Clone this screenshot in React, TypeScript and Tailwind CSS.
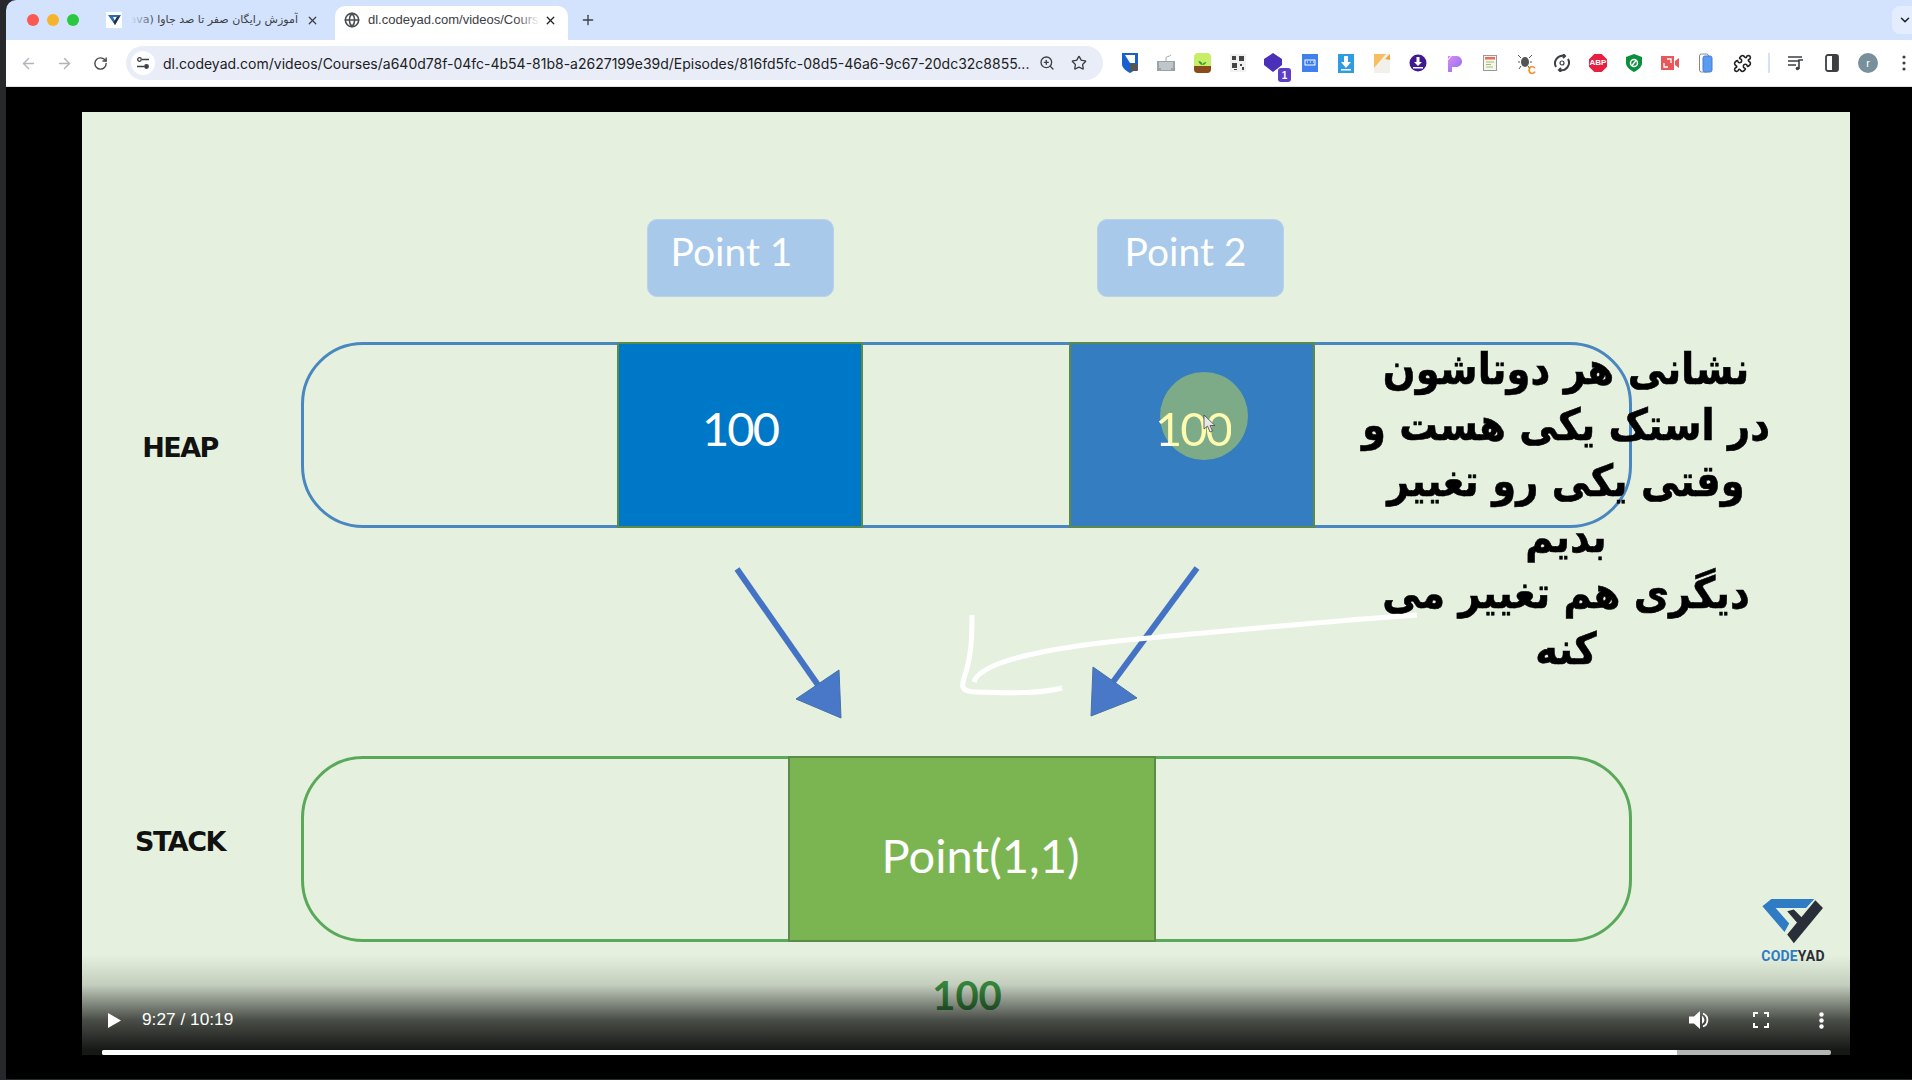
import { ArrowLeft, ArrowRight, RotateCw, ZoomIn, Star, X, Plus, ChevronDown, Globe, Puzzle } from "lucide-react";

const I = ({ children }: { children: React.ReactNode }) => (
  <div className="relative flex h-[36px] w-[36px] shrink-0 items-center justify-center">{children}</div>
);

const Extensions = () => (
  <div className="ml-[9px] flex items-center">
    <I>
      <svg width="17" height="20" viewBox="0 0 17 20"><path d="M0 0h16v11c0 4-4 7-8 9-4-2-8-5-8-9z" fill="#1a5fd0" /><path d="M3 2h10v8H8z" fill="#fff" /><rect x="8" y="11" width="8" height="7" rx="1" fill="#555" /></svg>
    </I>
    <I>
      <svg width="18" height="18" viewBox="0 0 18 18"><rect x="0" y="7" width="18" height="10" fill="#9aa3a8" /><path d="M9 7V4c0-2 3-1 5-3" stroke="#aaa" fill="none" /><path d="M2 9h14M2 11h14M2 13h14M4 15h10" stroke="#e6e8ea" /></svg>
    </I>
    <I>
      <svg width="17" height="20" viewBox="0 0 17 20"><rect width="17" height="20" rx="4" fill="#c8ee68" /><path d="M0 13h17v3a4 4 0 0 1-4 4H4a4 4 0 0 1-4-4z" fill="#8a4a1c" /><path d="M8.500 12c0-3-2-4-4-4 0 2 2 4 4 4 0-2 2-3 4-3-1 2-2 3-4 3" fill="#3a9a3a" /></svg>
    </I>
    <I>
      <svg width="16" height="18" viewBox="0 0 16 18"><rect width="16" height="18" fill="#f1f1f1" /><path d="M2 2h4v4H2zM9 2h5v5H9zM2 9h5v5H2zM10 10h2v2h-2zM12 13h2v3h-2zM4 15h3v1H4z" fill="#444" /></svg>
    </I>
    <I>
      <svg width="20" height="20" viewBox="0 0 20 20"><path d="M9 0l9 6v6l-9 7-9-7V6z" fill="#4a2fb8" /></svg>
      <div className="absolute bottom-[-1px] right-[1px] flex h-[14px] w-[13px] items-center justify-center rounded-[3px] bg-[#5d3ec7] font-['Liberation_Sans'] text-[10px] font-bold text-white">1</div>
    </I>
    <I>
      <svg width="16" height="18" viewBox="0 0 16 18"><rect width="16" height="18" fill="#3f7fee" /><rect x="3" y="6" width="10" height="5" fill="none" stroke="#fff" /><path d="M5 8h1M8 8h1M11 8h1" stroke="#fff" /></svg>
    </I>
    <I>
      <svg width="16" height="19" viewBox="0 0 16 19"><rect width="16" height="19" fill="#2f9be0" /><path d="M6 2h4v6h3l-5 6-5-6h3z" fill="#fff" /><rect x="3" y="15" width="10" height="1.500" fill="#fff" /></svg>
    </I>
    <I>
      <svg width="16" height="19" viewBox="0 0 16 19"><rect width="16" height="19" fill="#f2f0ea" /><path d="M0 0h12L0 14z" fill="#f8bd5c" /><path d="M16 0v6l-5-1z" fill="#f5a33a" /></svg>
    </I>
    <I>
      <svg width="18" height="18" viewBox="0 0 18 18"><circle cx="9" cy="9" r="8.500" fill="#3f1a8f" /><path d="M7.500 3h3v5h2.500L9 12 5 8h2.500z" fill="#fff" /><rect x="4" y="13" width="10" height="1.500" fill="#fff" /></svg>
    </I>
    <I>
      <svg width="16" height="18" viewBox="0 0 16 18">
        <defs><linearGradient id="pg" x1="0" y1="0" x2="1" y2="1"><stop offset="0" stopColor="#d98cf0" /><stop offset="1" stopColor="#8a6cf5" /></linearGradient></defs>
        <path d="M2 2h8a5.500 5.500 0 0 1 1 11H6v5H2z" fill="url(#pg)" /><path d="M1 7l6-7M1 3l3-3" stroke="#fff" />
      </svg>
    </I>
    <I>
      <svg width="14" height="16" viewBox="0 0 14 16"><rect x=".5" y=".5" width="13" height="15" fill="#f7f5f0" stroke="#999" /><rect x="2" y="2" width="10" height="2.500" fill="#ee6a5a" /><path d="M3 7h8M3 9.500h5M3 12h7" stroke="#9bc46a" /></svg>
    </I>
    <I>
      <svg width="17" height="20" viewBox="0 0 17 20"><ellipse cx="7" cy="9" rx="4" ry="5" fill="#555" /><path d="M3 5L0 2M11 5l3-3M2 9H0M12 9h2M3 13l-2 3M10 13l2 3" stroke="#555" fill="none" /></svg>
      <span className="absolute bottom-[5px] right-[8px] font-['Liberation_Sans'] text-[11px] font-bold leading-none text-[#f08c1a]">C</span>
    </I>
    <I>
      <svg width="18" height="18" viewBox="0 0 18 18" fill="none" stroke="#3d4043" strokeWidth="2"><path d="M3 13A7.500 7.500 0 0 1 11 2" /><path d="M15 5a7.500 7.500 0 0 1-8 11" /><path d="M10 0l2 2-2 2M8 14l-2 2 2 2" /><circle cx="9" cy="9" r="2" strokeWidth="1.200" /></svg>
    </I>
    <I>
      <svg width="18" height="18" viewBox="0 0 18 18" className="absolute"><path d="M5.300 0h7.400L18 5.300v7.400L12.700 18H5.300L0 12.700V5.300z" fill="#e8203f" /></svg>
      <span className="relative font-['Liberation_Sans'] text-[8px] font-bold leading-none text-white">ABP</span>
    </I>
    <I>
      <svg width="16" height="18" viewBox="0 0 16 18"><path d="M8 0l8 3v6c0 4-4 7-8 9-4-2-8-5-8-9V3z" fill="#0a8f3c" /><circle cx="8" cy="9" r="3.500" fill="none" stroke="#fff" strokeWidth="1.500" /><path d="M6 11.500l4-5" stroke="#fff" strokeWidth="1.500" /></svg>
    </I>
    <I>
      <svg width="18" height="14" viewBox="0 0 18 14"><rect width="13" height="14" fill="#e8585a" /><path d="M14 5l4-3v10l-4-3z" fill="#e8585a" /><path d="M3 7v4h4M10 7V3H6" stroke="#fff" strokeWidth="1.300" fill="none" /></svg>
    </I>
    <I>
      <svg width="14" height="20" viewBox="0 0 14 20"><rect x=".5" y="1" width="9" height="18" rx="2" fill="#fff" stroke="#888" /><rect x="4" y="3" width="9" height="16" rx="2" fill="#5b9bf0" stroke="#3f7fd8" /></svg>
    </I>
    <I>
      <Puzzle size={19} color="#202124" strokeWidth={2} />
    </I>
    <div className="mx-[8px] h-[20px] w-[2px] shrink-0 bg-[#d3e3fd]" />
    <I>
      <svg width="16" height="16" viewBox="0 0 16 16" fill="none" stroke="#3c4043" strokeWidth="1.600"><path d="M0 2h14M0 6h11M0 10h8" /><path d="M11 14V5h4" /><circle cx="9.500" cy="13.500" r="1.800" fill="#3c4043" stroke="none" /></svg>
    </I>
    <I>
      <svg width="14" height="18" viewBox="0 0 14 18"><rect x="1" y="1" width="12" height="16" rx="2" fill="#fff" stroke="#3c4043" strokeWidth="1.800" /><rect x="7" y="1" width="6" height="16" fill="#3c4043" /></svg>
    </I>
    <I>
      <div className="flex h-[20px] w-[20px] items-center justify-center rounded-full bg-[#78909c] font-['Liberation_Sans'] text-[11px] text-white">r</div>
    </I>
    <I>
      <svg width="4" height="16" viewBox="0 0 4 16" fill="#3c4043"><circle cx="2" cy="2" r="1.600" /><circle cx="2" cy="8" r="1.600" /><circle cx="2" cy="14" r="1.600" /></svg>
    </I>
  </div>
);

const Browser = () => (
  <>
    <div className="relative flex h-[40px] shrink-0 items-end bg-[#d3e3fd] font-['Liberation_Sans'] text-[12px] text-[#3c4043]">
      <div className="ml-[21px] mb-[14px] flex w-[52px] shrink-0 justify-between">
        <div className="h-[12px] w-[12px] rounded-full bg-[#fa5a52]" />
        <div className="h-[12px] w-[12px] rounded-full bg-[#f5b42c]" />
        <div className="h-[12px] w-[12px] rounded-full bg-[#2ac840]" />
      </div>
      <div className="flex h-[34px] w-[256px] shrink-0 items-center pb-[6px] pl-[27px]">
        <div className="flex h-[16px] w-[16px] shrink-0 items-center justify-center bg-white">
          <svg width="13" height="12" viewBox="0 0 13 12"><path d="M0 1h13L7 11z" fill="#2b6cb8" /><path d="M5 3h4L7 7z" fill="#fff" /><path d="M12 2L7 11 5.500 8 9 3z" fill="#2a2f3a" /></svg>
        </div>
        <div dir="rtl" className="relative ml-[9px] h-[16px] w-[167px] shrink-0 overflow-hidden whitespace-nowrap text-right font-['DejaVu_Sans','Noto_Sans',sans-serif] text-[11px] leading-[16px]">
          آموزش رایگان صفر تا صد جاوا (Java)
          <div className="absolute inset-y-0 left-0 w-[24px] bg-linear-to-r from-[#d3e3fd] to-transparent" />
        </div>
        <X size={13} strokeWidth={2.200} className="ml-[8px] shrink-0 text-[#3c4043]" />
      </div>
      <div className="flex h-[34px] w-[233px] shrink-0 items-center rounded-t-[10px] bg-white pb-[6px] pl-[9px]">
        <Globe size={16} strokeWidth={2.400} className="shrink-0 text-[#4a4d52]" />
        <div className="relative ml-[8px] w-[172px] shrink-0 overflow-hidden whitespace-nowrap text-[13px] leading-[16px]">
          dl.codeyad.com/videos/Courses/a640d78f
          <div className="absolute inset-y-0 right-0 w-[24px] bg-linear-to-l from-white to-transparent" />
        </div>
        <X size={13} strokeWidth={2.400} className="ml-[4px] shrink-0 text-[#202124]" />
      </div>
      <Plus size={16} strokeWidth={2} className="ml-[12px] mb-[12px] shrink-0 text-[#3c4043]" />
      <div className="ml-auto mb-[6px] flex h-[28px] w-[20px] items-center rounded-l-[8px] bg-[#e4edfd] pl-[6px]">
        <ChevronDown size={14} strokeWidth={2.600} className="shrink-0 text-[#202124]" />
      </div>
    </div>
    <div className="flex h-[47px] shrink-0 items-center border-b border-[#dfe1e5] bg-white pl-[14px] font-['Liberation_Sans']">
      <ArrowLeft size={17} strokeWidth={2} className="shrink-0 text-[#b0b4b9]" />
      <ArrowRight size={17} strokeWidth={2} className="ml-[19px] shrink-0 text-[#b0b4b9]" />
      <RotateCw size={15} strokeWidth={2.200} className="ml-[20px] shrink-0 text-[#444746]" />
      <div className="ml-[18px] flex h-[34px] w-[977px] shrink-0 items-center rounded-full bg-[#e9edf7] pl-[5px]">
        <div className="flex h-[24px] w-[24px] shrink-0 items-center justify-center rounded-full bg-white">
          <svg width="14" height="14" viewBox="0 0 14 14" fill="none" stroke="#3c4043" strokeWidth="1.300"><circle cx="3.500" cy="3.500" r="1.800" /><path d="M6 3.500h7M1 10.500h7" /><circle cx="10.500" cy="10.500" r="1.800" fill="#3c4043" /></svg>
        </div>
        <div className="ml-[8px] w-[872px] shrink-0 overflow-hidden whitespace-nowrap font-['Inter',sans-serif] text-[14px] text-[#202124]">
          dl.codeyad.com/videos/Courses/a640d78f-04fc-4b54-81b8-a2627199e39d/Episodes/816fd5fc-08d5-46a6-9c67-20dc32c8855...
        </div>
        <ZoomIn size={16} strokeWidth={2} className="ml-[4px] shrink-0 text-[#3c4043]" />
        <Star size={16} strokeWidth={2} className="ml-[16px] shrink-0 text-[#3c4043]" />
      </div>
      <Extensions />
    </div>
  </>
);

const Cell = ({ className, children }: { className: string; children?: React.ReactNode }) => (
  <div className={`-my-[3px] flex shrink-0 items-center justify-center border-[2px] border-[#5b8a4a] ${className}`}>{children}</div>
);

const Controls = () => (
  <div className="absolute inset-x-0 bottom-0 h-[100px] bg-[linear-gradient(to_bottom,transparent,rgba(0,0,0,0.15)_30%,rgba(0,0,0,0.38)_45%,rgba(0,0,0,0.68)_65%,rgba(0,0,0,0.9)_95%)]">
    <div className="absolute inset-x-0 bottom-[17px] flex h-[36px] items-center pl-[26px] pr-[26px] font-['Liberation_Sans'] text-[17.300px] text-white">
      <svg width="13" height="15" viewBox="0 0 13 15" fill="#fff" className="shrink-0"><path d="M0 0l13 7.500L0 15z" /></svg>
      <span className="ml-[21px] whitespace-nowrap">9:27 / 10:19</span>
      <svg width="22" height="20" viewBox="0 0 22 20" fill="#fff" className="ml-auto shrink-0"><path d="M0 6.500h5L11 1v18l-6-5.500H0z" /><path d="M14 3.500a7 7 0 0 1 0 13" fill="none" stroke="#fff" strokeWidth="1.800" /><path d="M13 6v8a4.500 4.500 0 0 0 0-8z" /></svg>
      <svg width="16" height="16" viewBox="0 0 16 16" fill="none" stroke="#fff" strokeWidth="2" className="ml-[42px] shrink-0"><path d="M1 5V1h4M11 1h4v4M15 11v4h-4M5 15H1v-4" /></svg>
      <svg width="5" height="17" viewBox="0 0 5 17" fill="#fff" className="ml-[50px] shrink-0"><circle cx="2.500" cy="2.500" r="2.200" /><circle cx="2.500" cy="8.500" r="2.200" /><circle cx="2.500" cy="14.500" r="2.200" /></svg>
    </div>
    <div className="absolute bottom-0 left-[20px] flex h-[5px] w-[1729px] overflow-hidden rounded-[2px] bg-[#b5b5b5]">
      <div className="h-full w-[1575px] bg-white" />
    </div>
  </div>
);

const Slide = () => (
  <div className="relative h-[943px] w-[1768px] shrink-0 overflow-hidden bg-[#e5f1de] font-['Lato',sans-serif] text-white">
    <div className="absolute left-[565px] top-[107px] flex h-[78px] w-[187px] justify-center rounded-[10px] border border-[#b8d2ea] bg-[#a8c9e9] pr-[18px] pt-[6px] text-[39px] leading-[50px]">Point 1</div>
    <div className="absolute left-[1015px] top-[107px] flex h-[78px] w-[187px] justify-center rounded-[10px] border border-[#b8d2ea] bg-[#a8c9e9] pr-[10px] pt-[6px] text-[39px] leading-[50px]">Point 2</div>

    <div className="absolute left-[219px] top-[230px] flex h-[186px] w-[1331px] rounded-[62px] border-[3px] border-[#4a86c0]">
      <div className="w-[313px] shrink-0" />
      <Cell className="w-[246px] bg-[#0078c8]"><span className="mb-[14px] text-[47px] tracking-[-2px]">100</span></Cell>
      <div className="w-[206px] shrink-0" />
      <Cell className="w-[246px] bg-[#337dc0]" />
    </div>
    <div className="absolute left-[1078px] top-[260px] h-[88px] w-[88px] rounded-full bg-[#7daa87]" />
    <span className="absolute left-[1073px] top-[288px] bg-[radial-gradient(circle_44px_at_49px_16px,#fdfbb0_99%,#ffffff_100%)] bg-clip-text text-[47px] leading-[56px] tracking-[-2px] text-transparent">100</span>
    <svg width="14" height="20" viewBox="0 0 14 20" className="absolute left-[1121px] top-[302px]"><path d="M1 1v14l3.500-3 2.500 6 2.500-1-2.500-5.500H12z" fill="#e8e8e8" stroke="#444" strokeWidth="0.800" /></svg>

    <div className="absolute left-[219px] top-[644px] flex h-[186px] w-[1331px] rounded-[62px] border-[3px] border-[#5aa85a]">
      <div className="w-[484px] shrink-0" />
      <Cell className="w-[368px] bg-[#7ab551]"><span className="ml-[17px] mt-[12px] whitespace-nowrap text-[47px]">Point(1,1)</span></Cell>
    </div>

    <span className="absolute left-[34px] top-[318px] w-[128px] text-center font-['DejaVu_Sans',sans-serif] text-[27px] font-bold leading-[36px] tracking-[-1.500px] text-[#111]">HEAP</span>
    <span className="absolute left-[34px] top-[712px] w-[128px] text-center font-['DejaVu_Sans',sans-serif] text-[27px] font-bold leading-[36px] tracking-[-1.500px] text-[#111]">STACK</span>

    <svg width="1768" height="943" viewBox="82 112 1768 943" className="absolute inset-0">
      <path d="M737 569L818 685" stroke="#4472c4" strokeWidth="6" />
      <path d="M839 670L796 699L841 718z" fill="#4a78c8" stroke="#4472a4" />
      <path d="M1197 568L1113 682" stroke="#4472c4" strokeWidth="6" />
      <path d="M1093 667L1137 698L1091 716z" fill="#4a78c8" stroke="#4472a4" />
      <path d="M972 615C972 640 971 655 966 672C962 684 958 692 976 692C1005 693 1040 694 1062 688" fill="none" stroke="#fff" strokeWidth="5" />
      <path d="M974 682C980 660 1060 645 1160 637C1260 628 1340 620 1417 615" fill="none" stroke="#fff" strokeWidth="5" />
    </svg>

    <div dir="rtl" className="absolute left-[1184px] top-[229px] w-[600px] scale-x-[0.875] whitespace-nowrap text-center font-['DejaVu_Sans',sans-serif] text-[44px] font-bold leading-[56px] text-black [-webkit-text-stroke:0.6px_black]">
      <div>نشانی هر دوتاشون</div>
      <div>در استک یکی هست و</div>
      <div>وقتی یکی رو تغییر</div>
      <div>بدیم</div>
      <div>دیگری هم تغییر می</div>
      <div>کنه</div>
    </div>

    <svg width="62" height="48" viewBox="785 55 185 145" className="absolute left-[1680px] top-[786px]">
      <path d="M785 80L812 58H942L917 85H825L866 132L852 158z" fill="#2f7cc4" />
      <path d="M945 62L968 85L880 192L860 165z" fill="#2a2e38" />
      <path d="M860 95L880 90L905 115L890 130z" fill="#2a2e38" />
    </svg>
    <div className="absolute left-[1670px] top-[836px] w-[82px] whitespace-nowrap text-center font-['Roboto',sans-serif] text-[14px] font-bold leading-[16px] tracking-[0.200px] text-[#2f7cc4]">
      CODE<span className="text-[#2a2e38]">YAD</span>
    </div>

    <span className="absolute left-[785px] top-[859px] w-[200px] text-center text-[40px] font-bold leading-[48px] text-[#3d9a44]">100</span>

    <Controls />
  </div>
);

export default function App() {
  return (
    <div className="h-[1080px] w-[1912px] overflow-hidden bg-[#26282c] pl-[6px]">
      <div className="flex h-[1079px] w-[1906px] flex-col overflow-hidden rounded-tl-[10px] bg-black">
        <Browser />
        <div className="flex flex-1 items-start pl-[76px] pt-[25px]">
          <Slide />
        </div>
      </div>
    </div>
  );
}
